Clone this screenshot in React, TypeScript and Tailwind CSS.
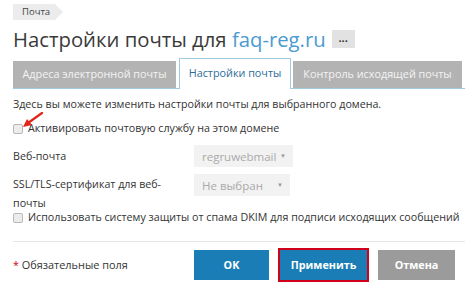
import React from 'react';

const Checkbox = () => (
  <span className="inline-block w-[10px] h-[10px] rounded-[2px] border border-[#b8b8b8] bg-[#ececec] shrink-0" />
);

const Select = ({ value, width }: { value: string; width: string }) => (
  <div className={`flex items-center justify-between h-[22px] bg-[#f2f2f2] pl-[8px] pr-[7px] text-[11.5px] text-[#aaaaaa] shrink-0 ${width}`}>
    <span>{value}</span>
    <span className="text-[6px] text-[#9a9a9a]">▼</span>
  </div>
);

export default function App() {
  return (
    <div
      className="w-[474px] h-[291px] bg-white text-[#333] relative overflow-hidden"
      style={{ fontFamily: '"Open Sans", "Noto Sans", sans-serif' }}
    >
      <div className="pl-[13px] pr-[9px]">
        {/* breadcrumb */}
        <div className="pt-[4px] flex">
          <div className="relative h-[16px] bg-[#ececec] pl-[9px] pr-[5px] text-[9.5px] leading-[16px] text-[#444]">
            Почта
            <span className="absolute right-[-8px] top-0 w-0 h-0 border-y-[8px] border-y-transparent border-l-[8px] border-l-[#ececec]" />
          </div>
        </div>

        {/* title */}
        <div className="flex items-center mt-[6px] h-[26px]">
          <h1 className="text-[20.3px] leading-[26px] font-normal text-[#3a3a3a]">
            Настройки почты для <span className="text-[#4b9ad0]">faq-reg.ru</span>
          </h1>
          <span className="ml-[6px] w-[23px] h-[18px] bg-[#e2e2e2] flex items-center justify-center text-[11px] leading-none font-bold text-[#333] pb-[4px]">
            ...
          </span>
        </div>

        {/* tabs */}
        <div className="flex items-end mt-[6px] h-[31px] border-b border-[#9fcbe0] text-[10.8px]">
          <div className="h-[27px] w-[163px] bg-[#b3b3b3] text-[#f4f4f4] flex items-center justify-center">
            Адреса электронной почты
          </div>
          <div className="h-[31px] w-[112px] ml-[3px] bg-white border border-b-0 border-[#9fcbe0] text-[#2b6d99] flex items-center justify-center mb-[-1px] pb-[1px]">
            Настройки почты
          </div>
          <div className="h-[27px] w-[169px] ml-[2px] bg-[#b3b3b3] text-[#f4f4f4] flex items-center justify-center">
            Контроль исходящей почты
          </div>
        </div>

        {/* body */}
        <div className="text-[10.7px] leading-[19px]">
          <p className="mt-[6px]">Здесь вы можете изменить настройки почты для выбранного домена.</p>
          <div className="flex items-center gap-[5px] mt-[5px]">
            <Checkbox />
            <span>Активировать почтовую службу на этом домене</span>
          </div>

          <div className="flex items-center mt-[7px]">
            <div className="w-[181px]">Веб-почта</div>
            <Select value="regruwebmail" width="w-[99px]" />
          </div>

          <div className="flex items-start mt-[7px]">
            <div className="w-[166px] mr-[15px] pt-[1px]">SSL/TLS-сертификат для веб-почты</div>
            <Select value="Не выбран" width="w-[96px]" />
          </div>

          <div className="flex items-center gap-[5px] mt-[-5px]">
            <Checkbox />
            <span className="whitespace-nowrap">Использовать систему защиты от спама DKIM для подписи исходящих сообщений</span>
          </div>
        </div>

        <div className="border-t border-[#e6e6e6] mt-[14px]" />

        {/* footer */}
        <div className="flex items-center mt-[6px]">
          <div className="w-[181px] text-[10.9px]">
            <span className="text-[#d0021b]">*</span> Обязательные поля
          </div>
          <button className="w-[75px] h-[30px] bg-[#1a7db6] text-white text-[10.8px] font-bold">OK</button>
          <div className="ml-[9px] border-[2px] border-[#d0021b]">
            <button className="w-[87px] h-[30px] bg-[#1a7db6] text-white text-[10.8px] font-bold block">Применить</button>
          </div>
          <button className="ml-[9px] w-[77px] h-[30px] bg-[#9b9b9b] text-white text-[10.8px] font-bold">Отмена</button>
        </div>
      </div>

      {/* red arrow pointer */}
      <svg className="absolute left-[20px] top-[112px]" width="24" height="18" viewBox="0 0 24 18">
        <line x1="22" y1="1" x2="8" y2="11" stroke="#e3241b" strokeWidth="2.2" strokeLinecap="round" />
        <polygon points="3,15 12,13 7,7" fill="#e3241b" />
      </svg>
    </div>
  );
}
